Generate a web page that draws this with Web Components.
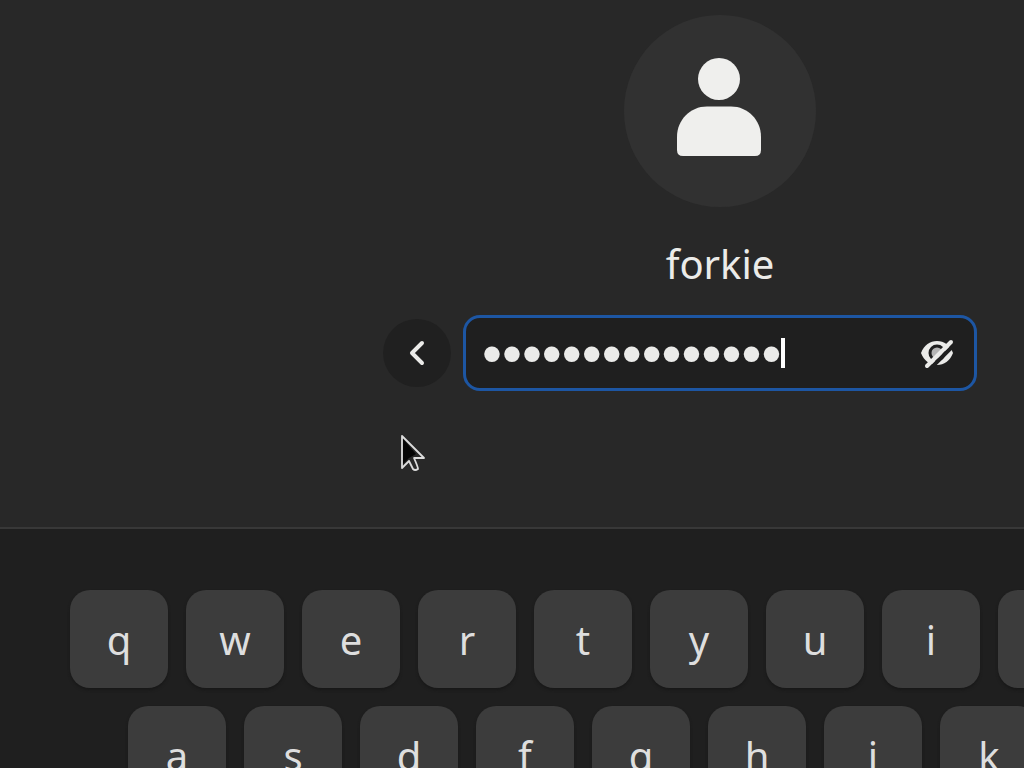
<!DOCTYPE html>
<html lang="en">
<head>
<meta charset="utf-8">
<title>Login</title>
<style>
  body {
    margin: 0;
    height: 100vh;
    overflow: hidden;
    background: #282828;
    color: #ebebe9;
    font-family: "Noto Sans", sans-serif;
    font-size: 40px;
  }
</style>
</head>
<body>
<login-screen>
  <user-avatar slot="avatar"></user-avatar>
  <span slot="name">forkie</span>
  <back-button slot="back"></back-button>
  <password-entry slot="entry"></password-entry>
  <screen-keyboard slot="keyboard">
    <key-row>
      <key-cap>q</key-cap><key-cap>w</key-cap><key-cap>e</key-cap><key-cap>r</key-cap><key-cap>t</key-cap><key-cap>y</key-cap><key-cap>u</key-cap><key-cap>i</key-cap><key-cap>o</key-cap>
    </key-row>
    <key-row indent>
      <key-cap>a</key-cap><key-cap>s</key-cap><key-cap>d</key-cap><key-cap>f</key-cap><key-cap>g</key-cap><key-cap>h</key-cap><key-cap>j</key-cap><key-cap>k</key-cap>
    </key-row>
  </screen-keyboard>
</login-screen>
<mouse-pointer></mouse-pointer>

<script>
function define(name, html) {
  const template = document.createElement("template");
  template.innerHTML = html;
  customElements.define(name, class extends HTMLElement {
    connectedCallback() {
      if (this.shadowRoot) return;
      this.attachShadow({ mode: "open" });
      this.shadowRoot.appendChild(template.content.cloneNode(true));
    }
  });
}

define("login-screen", `
  <style>
    :host {
      display: block;
    }
    main {
      display: grid;
      grid-template-columns: 1fr minmax(0, 514px);
      column-gap: 12px;
      align-items: center;
      padding: 15px 47px 136px 0;
    }
    .avatar, .name {
      grid-column: 2;
      justify-self: center;
    }
    .name {
      margin: 30px 0 24px;
      font-size: 40px;
      font-weight: 400;
      line-height: 54px;
    }
    .back {
      justify-self: end;
    }
  </style>
  <main>
    <div class="avatar"><slot name="avatar"></slot></div>
    <h1 class="name"><slot name="name"></slot></h1>
    <div class="back"><slot name="back"></slot></div>
    <slot name="entry"></slot>
  </main>
  <slot name="keyboard"></slot>`);

define("user-avatar", `
  <style>
    :host {
      display: grid;
      place-items: center;
      width: 192px;
      height: 192px;
      border-radius: 50%;
      background: #313131;
    }
    svg {
      display: block;
      fill: #efefed;
    }
  </style>
  <svg width="96" height="108" viewBox="0 0 96 108" aria-hidden="true">
    <circle cx="47" cy="22" r="21"/>
    <path d="M35 49.500H59C76 49.500 89 63 89 80V93Q89 99 83 99H11Q5 99 5 93V80C5 63 18 49.500 35 49.500Z"/>
  </svg>`);

define("back-button", `
  <style>
    :host {
      display: block;
    }
    button {
      display: grid;
      place-items: center;
      width: 68px;
      height: 68px;
      padding: 0;
      border: 0;
      border-radius: 50%;
      background: #202020;
      color: inherit;
    }
  </style>
  <button type="button" aria-label="Back">
    <svg width="32" height="32" viewBox="0 0 32 32" aria-hidden="true">
      <path d="M21 6L11 16L21 26" fill="none" stroke="currentColor" stroke-width="4" stroke-linecap="round" stroke-linejoin="round"/>
    </svg>
  </button>`);

define("password-entry", `
  <style>
    :host {
      display: flex;
      align-items: center;
      box-sizing: border-box;
      height: 76px;
      padding: 0 20px 0 16px;
      border: 3px solid #1d56a3;
      border-radius: 17px;
      background: #1f1f1f;
    }
    input {
      field-sizing: content;
      height: 68px;
      padding: 0;
      border: 0;
      outline: 0;
      background: none;
      color: inherit;
      font: 57px "Liberation Sans", sans-serif;
      caret-color: transparent;
    }
    .caret {
      width: 4px;
      height: 30px;
      background: #fff;
    }
    button {
      display: block;
      margin-left: auto;
      padding: 0;
      border: 0;
      background: none;
      color: inherit;
    }
    svg {
      display: block;
    }
  </style>
  <input type="password" value="correcthorsebat" aria-label="Password">
  <span class="caret"></span>
  <button type="button" aria-label="Show password">
    <svg width="34" height="32" viewBox="0 0 34 32" aria-hidden="true">
      <path d="M1 16C4 8 10 4 17 4C24 4 30 8 33 16C30 24 24 28 17 28C10 28 4 24 1 16Z" fill="currentColor"/>
      <circle cx="17" cy="16" r="7" fill="#b4b4b4" stroke="#1f1f1f" stroke-width="3"/>
      <path d="M35 7L11 31" stroke="#1f1f1f" stroke-width="4"/>
      <path d="M31 5L7 29" stroke="currentColor" stroke-width="4" stroke-linecap="round"/>
    </svg>
  </button>`);

define("screen-keyboard", `
  <style>
    :host {
      display: flex;
      flex-direction: column;
      gap: 18px;
      padding: 61px 0 18px 70px;
      border-top: 2px solid #383838;
      background: #1f1f1f;
    }
  </style>
  <slot></slot>`);

define("key-row", `
  <style>
    :host {
      display: flex;
      gap: 18px;
    }
    :host([indent]) {
      padding-left: 58px;
    }
  </style>
  <slot></slot>`);

define("key-cap", `
  <style>
    :host {
      display: block;
      flex: none;
    }
    button {
      display: block;
      width: 98px;
      height: 98px;
      padding: 0;
      border: 0;
      border-radius: 20px;
      background: #3c3c3c;
      box-shadow: 0 2px 3px #181818;
      color: #dedede;
      font: inherit;
    }
  </style>
  <button type="button"><slot></slot></button>`);

// floats over the page
define("mouse-pointer", `
  <style>
    :host {
      position: absolute;
      left: 400px;
      top: 432px;
      pointer-events: none;
    }
    svg {
      display: block;
    }
  </style>
  <svg width="28" height="42" viewBox="0 0 28 42" aria-hidden="true">
    <path d="M2 4V36L9 29L13 37Q15 39 18 37Q18 35 14 26H24Z" fill="#282828" stroke="#dcdcdc" stroke-width="1.800" stroke-linejoin="round"/>
    <path d="M3 7V32L9 26L16 22Z" fill="#050505"/>
  </svg>`);
</script>
</body>
</html>
